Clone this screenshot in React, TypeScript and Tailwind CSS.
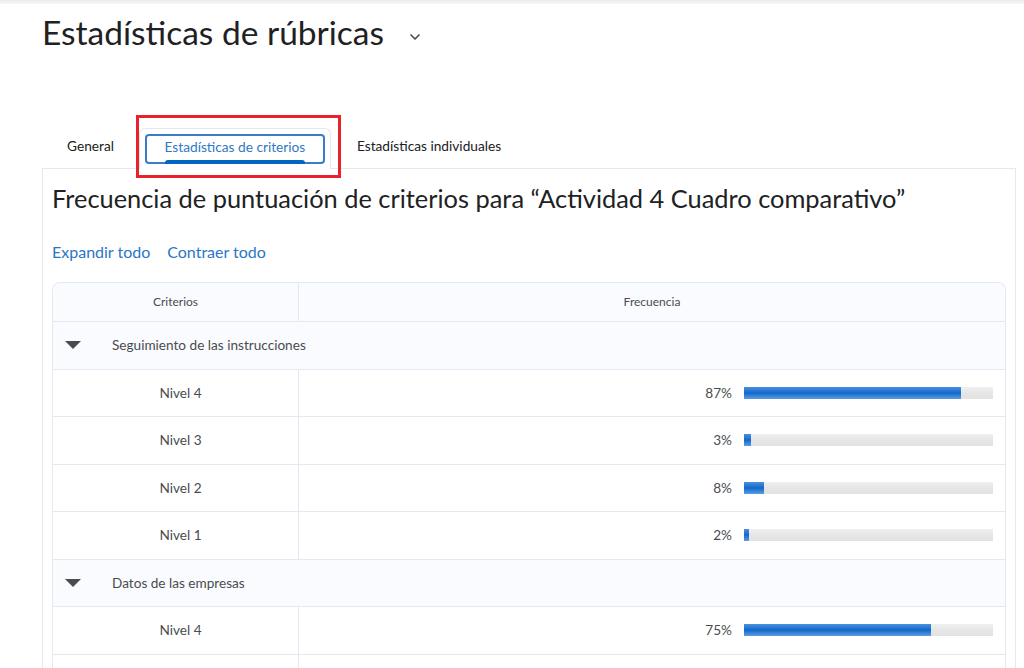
import { ChevronDown } from "lucide-react";

type Level = { name: string; pct: number };
type Criterion = { title: string; levels: Level[] };

const criteria: Criterion[] = [
  {
    title: "Seguimiento de las instrucciones",
    levels: [
      { name: "Nivel 4", pct: 87 },
      { name: "Nivel 3", pct: 3 },
      { name: "Nivel 2", pct: 8 },
      { name: "Nivel 1", pct: 2 },
    ],
  },
  {
    title: "Datos de las empresas",
    levels: [
      { name: "Nivel 4", pct: 75 },
      { name: "Nivel 3", pct: 17 },
    ],
  },
];

const Caret = () => (
  <svg width="16" height="8" viewBox="0 0 16 8" className="shrink-0">
    <path d="M0 0 H16 L8 8 Z" fill="#494c4e" />
  </svg>
);

// Progress bar with the glossy blue fill
const Bar = ({ pct }: { pct: number }) => (
  <div className="h-[12px] w-[249px] bg-gradient-to-b from-[#f0f0f0] via-[#e6e6e6] to-[#e2e2e2]">
    <div
      className="h-full bg-gradient-to-b from-[#4a90dc] via-[#0a68cc] to-[#5c9ce0]"
      style={{ width: `${pct}%` }}
    />
  </div>
);

const CriterionRows = ({ c }: { c: Criterion }) => (
  <>
    <div className="flex h-[47.5px] items-center border-b border-[#e3e9f1] bg-[#f9fbff] pl-[12px]">
      <Caret />
      <span className="ml-[31px] text-[13.6px] text-[#494c4e]">{c.title}</span>
    </div>
    {c.levels.map((l, i) => (
      <div key={i} className="flex h-[47.5px] border-b border-[#e3e9f1] bg-white">
        <div className="flex w-[246px] shrink-0 items-center justify-center border-r border-[#e3e9f1] pl-[10px] text-[13.6px] text-[#494c4e]">
          {l.name}
        </div>
        <div className="flex flex-1 items-center justify-end gap-[12px] pr-[12px]">
          <span className="text-[13.6px] text-[#494c4e]">{l.pct}%</span>
          <Bar pct={l.pct} />
        </div>
      </div>
    ))}
  </>
);

export default function App() {
  return (
    <div className="h-[668px] w-[1024px] overflow-hidden bg-white font-['Lato',sans-serif]">
      <div className="h-[4px] bg-gradient-to-b from-[#ececec] to-[#f7f7f7]" />

      {/* Page title */}
      <div className="flex items-center pl-[42px] pt-[8px]">
        <h1 className="text-[33.5px] leading-[40px] text-[#202122]">Estadísticas de rúbricas</h1>
        <ChevronDown size={16} strokeWidth={2.5} className="ml-[23px] mt-[10px] text-[#494c4e]" />
      </div>

      {/* Tabs */}
      <div className="relative mt-[76px] flex h-[40px] items-stretch pl-[42px]">
        <button className="flex items-center px-[25px] pb-[3px] text-[13.7px] text-[#202122]">General</button>
        <div className="relative z-10 -mb-px flex w-[192px] items-stretch rounded-t-[6px] border border-b-0 border-[#e3e9f1] bg-white px-[5px] pt-[5px] pb-[5px]">
          <div className="relative flex flex-1 items-center justify-center rounded-[4px] border-2 border-[#3a7cc7] pb-[3px] text-[13.7px] text-[#2f78c6]">
            Estadísticas de criterios
            <span className="absolute bottom-[-2px] left-[18px] right-[18px] h-[4px] rounded-t-[3px] bg-[#0066bf]" />
          </div>
        </div>
        <button className="flex items-center px-[26px] pb-[3px] text-[13.7px] text-[#202122]">
          Estadísticas individuales
        </button>

        {/* Annotation frame */}
        <div className="pointer-events-none absolute left-[136px] top-[-13px] h-[63px] w-[205px] border-[3px] border-[#e8212b]" />
      </div>

      {/* Panel */}
      <div className="ml-[42px] mr-[8px] border border-b-0 border-[#e3e9f1] px-[9px]">
        <h2 className="mt-[12px] text-[25.4px] leading-[34px] text-[#202122]">
          Frecuencia de puntuación de criterios para “Actividad 4 Cuadro comparativo”
        </h2>

        <div className="mt-[25px] flex gap-[17px] text-[16px] text-[#2a76c6]">
          <a className="cursor-pointer">Expandir todo</a>
          <a className="cursor-pointer">Contraer todo</a>
        </div>

        <div className="mt-[18px] overflow-hidden rounded-t-[8px] border border-b-0 border-[#e3e9f1]">
          <div className="flex h-[39px] border-b border-[#e3e9f1] bg-[#f9fbff] text-[12px] text-[#494c4e]">
            <div className="flex w-[246px] shrink-0 items-center justify-center border-r border-[#e3e9f1]">
              Criterios
            </div>
            <div className="flex flex-1 items-center justify-center">Frecuencia</div>
          </div>
          {criteria.map((c, i) => (
            <CriterionRows key={i} c={c} />
          ))}
        </div>
      </div>
    </div>
  );
}
